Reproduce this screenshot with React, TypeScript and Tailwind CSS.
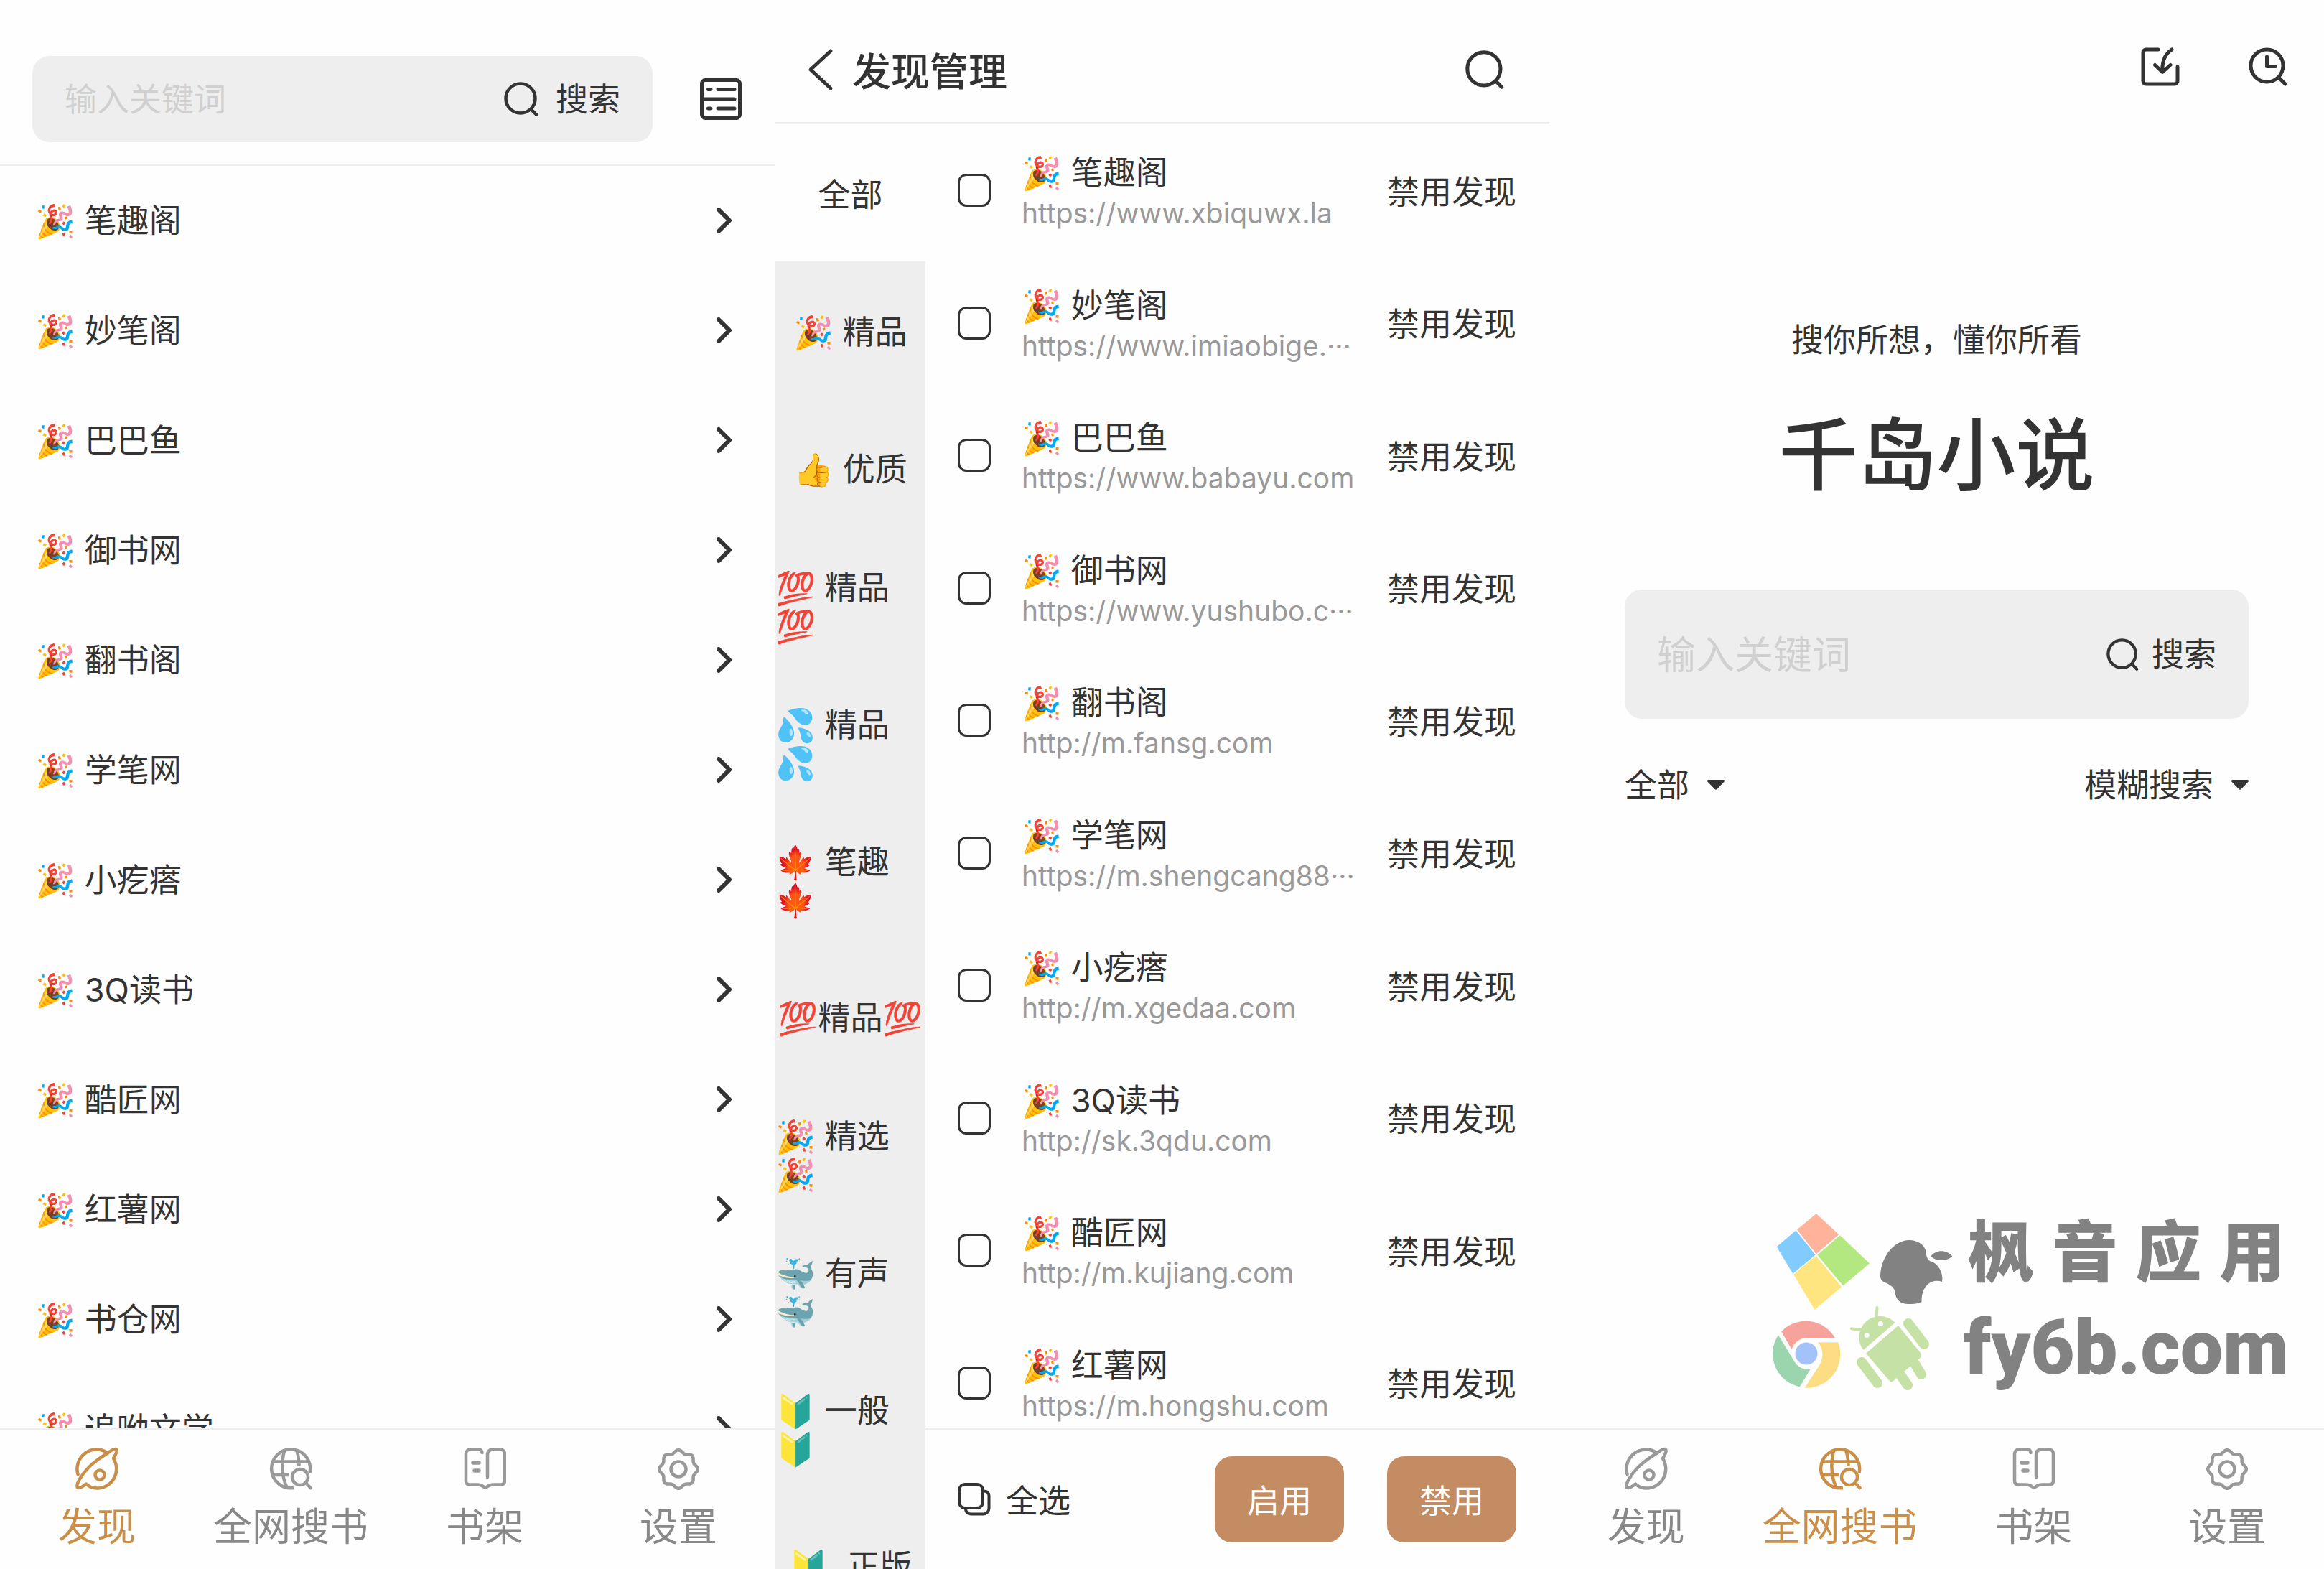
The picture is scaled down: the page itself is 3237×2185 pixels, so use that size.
import { useState } from 'react'
import type { ReactNode } from 'react'
import clsx from 'clsx'

const SOURCES = [
  { name: '🎉 笔趣阁', url: 'https://www.xbiquwx.la' },
  { name: '🎉 妙笔阁', url: 'https://www.imiaobige.···' },
  { name: '🎉 巴巴鱼', url: 'https://www.babayu.com' },
  { name: '🎉 御书网', url: 'https://www.yushubo.c···' },
  { name: '🎉 翻书阁', url: 'http://m.fansg.com' },
  { name: '🎉 学笔网', url: 'https://m.shengcang88···' },
  { name: '🎉 小疙瘩', url: 'http://m.xgedaa.com' },
  { name: '🎉 3Q读书', url: 'http://sk.3qdu.com' },
  { name: '🎉 酷匠网', url: 'http://m.kujiang.com' },
  { name: '🎉 红薯网', url: 'https://m.hongshu.com' },
]

const MORE_SOURCES = ['🎉 书仓网', '🎉 追呦文学']

const GROUPS = [
  '全部',
  '🎉 精品',
  '👍 优质',
  '💯 精品💯',
  '💦 精品💦',
  '🍁 笔趣🍁',
  '💯精品💯',
  '🎉 精选🎉',
  '🐳 有声🐳',
  '🔰 一般🔰',
  '🔰\u00a0 正版',
]

const TABS = [
  { label: '发现', icon: <PlanetIcon /> },
  { label: '全网搜书', icon: <GlobeSearchIcon /> },
  { label: '书架', icon: <BookIcon /> },
  { label: '设置', icon: <GearIcon /> },
]

export default function App() {
  return (
    <div className="grid h-screen grid-cols-[1080fr_1078fr_1079fr] bg-[#fefefe] font-[Inter,'Noto_Sans_CJK_SC','Noto_Color_Emoji',sans-serif] text-[45px] leading-[53px] text-[#333333]">
      <DiscoverScreen />
      <ManageScreen />
      <SearchScreen />
    </div>
  )
}

// 发现
function DiscoverScreen() {
  const names = [...SOURCES.map((s) => s.name), ...MORE_SOURCES]
  return (
    <section className="flex min-h-0 min-w-0 flex-col">
      <header className="flex items-center gap-[66px] border-b-[3px] border-[#ededed] pt-[78px] pr-[47px] pb-[30px] pl-[45px]">
        <form className="flex h-[120px] min-w-0 flex-1 items-center rounded-3xl bg-[#eeeeee] px-[45px]" onSubmit={(e) => e.preventDefault()}>
          <input
            type="text"
            aria-label="关键词"
            placeholder="输入关键词"
            className="min-w-0 flex-1 bg-transparent outline-none placeholder:text-[#d0d0d0]"
          />
          <button type="submit" className="flex items-center gap-[24px]">
            <SearchIcon className="size-[48px]" />
            搜索
          </button>
        </form>
        <button type="button" aria-label="发现管理">
          <ListIcon />
        </button>
      </header>
      <ul className="min-h-0 flex-1 overflow-hidden">
        {names.map((name) => (
          <li key={name}>
            <button type="button" className="flex h-[153px] w-full items-center justify-between pr-[59px] pl-[49px]">
              <span>{name}</span>
              <svg viewBox="0 0 24 38" className="h-[38px] w-[24px]" fill="none" stroke="currentColor" strokeWidth="6" strokeLinecap="round" strokeLinejoin="round">
                <path d="M4 3l15 15L4 33" />
              </svg>
            </button>
          </li>
        ))}
      </ul>
      <TabBar active="发现" />
    </section>
  )
}

// 发现管理
function ManageScreen() {
  const [checked, setChecked] = useState<string[]>([])
  const [group, setGroup] = useState('全部')

  const toggle = (name: string) =>
    setChecked((prev) => (prev.includes(name) ? prev.filter((n) => n !== name) : [...prev, name]))

  return (
    <section className="flex min-h-0 min-w-0 flex-col">
      <header className="flex h-[173px] items-center border-b-[3px] border-[#ededed] pt-[24px] pr-[63px] pl-[45px]">
        <button type="button" aria-label="返回">
          <svg viewBox="0 0 36 60" className="h-[60px] w-[36px]" fill="none" stroke="currentColor" strokeWidth="5" strokeLinecap="round" strokeLinejoin="round">
            <path d="M32 4L4 30l28 26" />
          </svg>
        </button>
        <h1 className="ml-[26px] pt-[8px] text-[54px] leading-[64px] font-medium">发现管理</h1>
        <button type="button" aria-label="搜索" className="ml-auto">
          <SearchIcon className="size-[54px]" />
        </button>
      </header>
      <div className="flex min-h-0 flex-1">
        <nav className="w-[209px] shrink-0 overflow-hidden bg-[#eeeeee]">
          {GROUPS.map((g) => (
            <button
              key={g}
              type="button"
              onClick={() => setGroup(g)}
              className={clsx('flex h-[191px] w-full items-center justify-center pt-[6px]', group === g && 'bg-[#fefefe]')}
            >
              <span className="text-left">{g}</span>
            </button>
          ))}
        </nav>
        <div className="flex min-w-0 flex-1 flex-col">
          <ul className="min-h-0 flex-1 overflow-hidden">
            {SOURCES.map((s) => (
              <li key={s.name} className="flex h-[184px] items-center pr-[46px] pl-[45px] even:h-[185px]">
                <label className="flex min-w-0 flex-1 items-center gap-[43px]">
                  <input
                    type="checkbox"
                    checked={checked.includes(s.name)}
                    onChange={() => toggle(s.name)}
                    className="size-[46px] shrink-0 appearance-none rounded-xl border-[3px] border-[#333333] checked:bg-[#c48c62]"
                  />
                  <span className="flex min-w-0 flex-col pt-[6px]">
                    <span className="leading-[58px]">{s.name}</span>
                    <span className="text-[39px] leading-[54px] whitespace-nowrap text-[#999999]">{s.url}</span>
                  </span>
                </label>
                <button type="button" className="shrink-0 pt-[4px]">禁用发现</button>
              </li>
            ))}
          </ul>
          <footer className="flex h-[197px] items-center gap-[60px] border-t-[3px] border-[#ededed] pr-[46px] pl-[45px]">
            <button type="button" className="mr-auto flex items-center gap-[21px]" onClick={() => setChecked(SOURCES.map((s) => s.name))}>
              <CopyIcon />
              <span className="pt-[4px]">全选</span>
            </button>
            <button type="button" className="h-[120px] w-[180px] rounded-3xl bg-[#c48c62] pt-[4px] text-white">启用</button>
            <button type="button" className="h-[120px] w-[180px] rounded-3xl bg-[#c48c62] pt-[4px] text-white">禁用</button>
          </footer>
        </div>
      </div>
    </section>
  )
}

// 全网搜书
function SearchScreen() {
  return (
    <section className="flex min-h-0 min-w-0 flex-col">
      <header className="flex justify-end gap-[96px] pt-[66px] pr-[51px]">
        <button type="button" aria-label="导入">
          <ImportIcon />
        </button>
        <button type="button" aria-label="搜索历史">
          <HistoryIcon />
        </button>
      </header>
      <main className="flex min-h-0 flex-1 flex-col px-[105px] pt-[327px]">
        <p className="text-center">搜你所想，懂你所看</p>
        <h2 className="mt-[69px] text-center text-[110px] leading-[130px] font-medium">千岛小说</h2>
        <form className="mt-[122px] flex h-[180px] items-center rounded-3xl bg-[#eeeeee] px-[45px]" onSubmit={(e) => e.preventDefault()}>
          <input
            type="text"
            aria-label="关键词"
            placeholder="输入关键词"
            className="min-w-0 flex-1 bg-transparent pt-[4px] text-[54px] leading-[64px] outline-none placeholder:text-[#d0d0d0]"
          />
          <button type="submit" className="flex items-center gap-[18px]">
            <SearchIcon className="size-[45px]" />
            搜索
          </button>
        </form>
        <div className="mt-[64px] flex justify-between">
          <Dropdown label="搜索范围" options={['全部', '精品']} />
          <Dropdown label="搜索方式" options={['模糊搜索', '精准搜索']} />
        </div>
      </main>
      <div className="mb-[46px] flex justify-end gap-[8px] pr-[54px]">
        <BrandLogos />
        <div className="flex w-[448px] flex-col text-[#828282]">
          <div className="flex justify-between pl-[6px] text-[92px] leading-[116px] font-black">
            <span>枫</span>
            <span>音</span>
            <span>应</span>
            <span>用</span>
          </div>
          <div className="mt-[15px] font-[Roboto,sans-serif] text-[106px] leading-[120px] font-black">fy6b.com</div>
        </div>
      </div>
      <TabBar active="全网搜书" />
    </section>
  )
}

function Dropdown({ label, options }: { label: string; options: string[] }) {
  return (
    <label className="flex items-center gap-[24px]">
      <select aria-label={label} className="appearance-none bg-transparent pt-[2px] outline-none">
        {options.map((o) => (
          <option key={o}>{o}</option>
        ))}
      </select>
      <svg viewBox="0 0 24 14" className="h-[14px] w-[24px]" fill="currentColor">
        <path d="M2 0h20c2 0 2.600 1.500 1.500 2.700L13.500 13c-1 1-2 1-3 0L.5 2.700C-.6 1.500 0 0 2 0z" />
      </svg>
    </label>
  )
}

function TabBar({ active }: { active: string }) {
  return (
    <nav className="grid h-[197px] shrink-0 grid-cols-4 border-t-[3px] border-[#ededed]">
      {TABS.map((t) => (
        <a
          key={t.label}
          href="#"
          className={clsx('flex flex-col items-center pt-[24px]', t.label === active ? 'text-[#c98f48]' : 'text-[#999999]')}
        >
          {t.icon}
          <span className={clsx('mt-[20px] text-[54px] leading-[64px]', t.label !== active && 'text-[#888888]')}>{t.label}</span>
        </a>
      ))}
    </nav>
  )
}

function TabIcon({ children }: { children: ReactNode }) {
  return (
    <svg viewBox="0 0 60 60" className="size-[60px]" fill="none" stroke="currentColor" strokeWidth="4.500" strokeLinecap="round" strokeLinejoin="round">
      {children}
    </svg>
  )
}

function PlanetIcon() {
  return (
    <TabIcon>
      <path d="M3.500 38A27 27 0 0 1 45 8.500" />
      <path d="M45 8.500C50 4.500 55 1.500 57 3.500C59 6 55.500 11.500 53 16A27 27 0 0 1 30 57.500C24 57.500 19 55.500 15 51.500C10 55.500 5 58.500 3 56.500C0 53 8 39 19 28C28 19 37 13.500 45 8.500z" />
      <circle cx="34" cy="39" r="6.500" />
    </TabIcon>
  )
}

function GlobeSearchIcon() {
  return (
    <TabIcon>
      <g strokeLinecap="butt">
        <path d="M56.500 36A27 27 0 1 0 34 57" />
        <path d="M5 20.500H55M5 39H28" />
        <path d="M21.500 4C17 18 17 40 24 55M38 4C40.500 11 41.500 19 41.500 27" />
      </g>
      <circle cx="43" cy="42" r="11" />
      <path d="M51 50l6.500 7" />
    </TabIcon>
  )
}

function BookIcon() {
  return (
    <TabIcon>
      <path d="M26.500 8C26.500 5 24.500 3.500 22 3.500H10A6 6 0 0 0 4 9.500V47C4 50.500 5.500 52.500 9 52.500H19C24 52.500 26 53.500 31 57C36 53.500 38 52.500 43 52.500H52C56 52.500 58 50.500 58 47V9.500A6 6 0 0 0 52 3.500H43C37.500 3.500 34 5.500 34 11V42" />
      <path d="M14 22H22M16 33H22" strokeWidth="5.500" />
    </TabIcon>
  )
}

// 齿轮外圈：八个圆滑的齿
const GEAR_PATH =
  Array.from({ length: 96 }, (_, i) => {
    const a = (i / 96) * Math.PI * 2
    const r = 24.8 + 2 * Math.cos(8 * a)
    return `${i === 0 ? 'M' : 'L'}${(30 + r * Math.sin(a)).toFixed(1)} ${(31 - r * Math.cos(a)).toFixed(1)}`
  }).join('') + 'z'

function GearIcon() {
  return (
    <TabIcon>
      <path d={GEAR_PATH} />
      <circle cx="30" cy="31" r="10.500" />
    </TabIcon>
  )
}

function SearchIcon({ className }: { className: string }) {
  return (
    <svg viewBox="0 0 48 48" className={className} fill="none" stroke="currentColor" strokeWidth="4.500" strokeLinecap="round">
      <circle cx="23" cy="23" r="20.500" />
      <path d="M38 38.500l7 7" />
    </svg>
  )
}

function ListIcon() {
  return (
    <svg viewBox="0 0 58 58" className="size-[58px]" fill="none" stroke="currentColor" strokeWidth="5" strokeLinecap="round">
      <rect x="2.500" y="2.500" width="53" height="53" rx="5" />
      <path d="M4 29H48M11.500 15.500H15M25 15.500H48M11.500 42H15M25 42H48" />
    </svg>
  )
}

function CopyIcon() {
  return (
    <svg viewBox="0 0 46 46" className="size-[46px]" fill="none" stroke="currentColor" strokeWidth="4" strokeLinecap="round">
      <rect x="2" y="2" width="33" height="33" rx="8" />
      <path d="M36 11.500C41 11.500 43.500 14 43.500 18.500V35.500A8 8 0 0 1 35.500 43.500H19C14.500 43.500 11 41 11 36" />
    </svg>
  )
}

function ImportIcon() {
  return (
    <svg viewBox="0 0 54 54" className="size-[54px]" fill="none" stroke="currentColor" strokeWidth="5" strokeLinecap="round" strokeLinejoin="round">
      <path d="M24 3H7A4 4 0 0 0 3 7V47A4 4 0 0 0 7 51H47A4 4 0 0 0 51 47V27" />
      <path d="M43 3C34 9 29 19 30 34M19.500 24.500L30 34.500L41 24.500" />
    </svg>
  )
}

function HistoryIcon() {
  return (
    <svg viewBox="0 0 54 54" className="size-[54px]" fill="none" stroke="currentColor" strokeWidth="5" strokeLinecap="round" strokeLinejoin="round">
      <circle cx="25.500" cy="25.500" r="22.500" />
      <path d="M25.500 13V26.500H37.500M43 43l8 8" />
    </svg>
  )
}

function BrandLogos() {
  return (
    <svg viewBox="0 0 262 256" className="h-[256px] w-[262px]">
      <path fill="#ffb39b" d="M64.700 4L96.200 33.300L64.700 60.400L38 26.600z" />
      <path fill="#82cbff" d="M36.400 27.600L63.700 61.400L32.200 87.800L9.700 50.300z" />
      <path fill="#b3e780" d="M97.800 34.300L139 73.400L102.100 104.600L66.300 61.700z" />
      <path fill="#ffe57f" d="M64.200 62.400L100 106.200L62.600 138L33.200 88.800z" />
      <path fill="#828282" d="M154 91C155 62 175 41 194 41C207 41 216 48 217.500 57C218 64 220 70 226 71C235 75 242 86 240 99C226 94 211 104 211.600 127C205 130 200 130 193 130C182 130 176 124 175 116C174 106 168 104 163 101C157 99 154 96 154 91z" />
      <path fill="#828282" d="M224.400 63.400C232 54 246 54 254.300 63.400C246 71 232 71 224.400 63.400z" />
      <path fill="#f6a39c" d="M16.200 168.200A47 47 0 0 1 90.900 177.200H51A22 22 0 0 0 30.600 193.300z" />
      <path fill="#9ad5ae" d="M11.900 173.200A47 47 0 0 0 41.800 245.200L56.700 220.400C47 222 39 218 34.300 210z" />
      <path fill="#fddd84" d="M66.900 183.200H95.200A47 47 0 0 1 48.700 246.800L69.500 214.400C76 203 74 191 66.900 183.200z" />
      <circle fill="#a3c2fa" cx="51" cy="199" r="15.500" />
      <g fill="#c5e1a5" stroke="#c5e1a5" strokeLinecap="round">
        <path stroke="none" d="M174.700 155.800A29.300 29.300 0 0 0 130.400 194z" />
        <path strokeWidth="4" d="M149.500 135L148.500 150M114 164.200L128 166" />
        <path stroke="none" d="M179 160L210 198C212 202 211 205 206 208L172 237C170 239 168 239 166 236L134 198.700z" />
        <path strokeWidth="14" d="M199 208L211 228M183 230L192 243M193 157L215 186M128 211L150 240" />
      </g>
      <circle fill="#fefefe" cx="154.400" cy="157.500" r="3.500" />
      <circle fill="#fefefe" cx="135.200" cy="173.500" r="3.500" />
    </svg>
  )
}
